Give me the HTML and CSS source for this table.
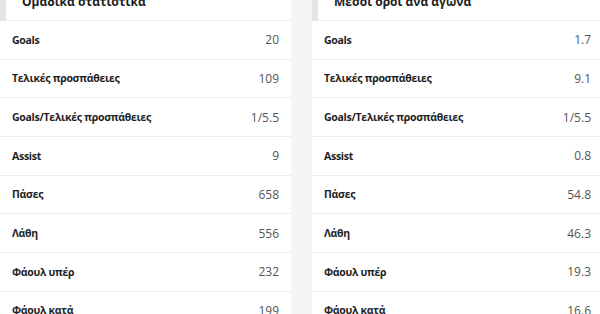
FILE: index.html
```html
<!DOCTYPE html>
<html lang="el">
<head>
<meta charset="utf-8">
<title>Στατιστικά</title>
<link rel="stylesheet" href="styles.css">
</head>
<body>
<div class="page">
  <section class="panel">
    <h2 class="panel-title">Ομαδικά στατιστικά</h2>
    <div class="row"><span class="label">Goals</span><span class="value">20</span></div>
    <div class="row"><span class="label">Τελικές προσπάθειες</span><span class="value">109</span></div>
    <div class="row"><span class="label">Goals/Τελικές προσπάθειες</span><span class="value">1/5.5</span></div>
    <div class="row"><span class="label">Assist</span><span class="value">9</span></div>
    <div class="row"><span class="label">Πάσες</span><span class="value">658</span></div>
    <div class="row"><span class="label">Λάθη</span><span class="value">556</span></div>
    <div class="row"><span class="label">Φάουλ υπέρ</span><span class="value">232</span></div>
    <div class="row"><span class="label">Φάουλ κατά</span><span class="value">199</span></div>
  </section>
  <section class="panel">
    <h2 class="panel-title">Μέσοι όροι ανά αγώνα</h2>
    <div class="row"><span class="label">Goals</span><span class="value">1.7</span></div>
    <div class="row"><span class="label">Τελικές προσπάθειες</span><span class="value">9.1</span></div>
    <div class="row"><span class="label">Goals/Τελικές προσπάθειες</span><span class="value">1/5.5</span></div>
    <div class="row"><span class="label">Assist</span><span class="value">0.8</span></div>
    <div class="row"><span class="label">Πάσες</span><span class="value">54.8</span></div>
    <div class="row"><span class="label">Λάθη</span><span class="value">46.3</span></div>
    <div class="row"><span class="label">Φάουλ υπέρ</span><span class="value">19.3</span></div>
    <div class="row"><span class="label">Φάουλ κατά</span><span class="value">16.6</span></div>
  </section>
</div>
</body>
</html>
```
FILE: styles.css
```css
html, body {
  margin: 0;
  padding: 0;
  background: #f5f5f5;
  overflow: hidden;
}
body {
  font-family: "Open Sans", "Noto Sans", sans-serif;
  color: #222;
}
.page {
  display: grid;
  grid-template-columns: 291px 291px;
  column-gap: 21px;
  margin-top: -20px;
}
.panel {
  background: #fff;
}
.panel-title {
  margin: 0;
  font-size: 12px;
  line-height: 20px;
  font-weight: 700;
  color: #1e1e1e;
  padding: 12px 15px 8px 16px;
  border-left: 6px solid #e4e4e4;
  border-bottom: 1px solid #ececec;
}
.row {
  display: flex;
  justify-content: space-between;
  align-items: center;
  height: 37.67px;
  padding: 0 12px;
  border-bottom: 1px solid #ececec;
}
.label {
  font-size: 10.5px;
  font-weight: 700;
  letter-spacing: -0.28px;
  color: #1e1e1e;
}
.value {
  font-size: 12px;
  color: #555;
}
```
